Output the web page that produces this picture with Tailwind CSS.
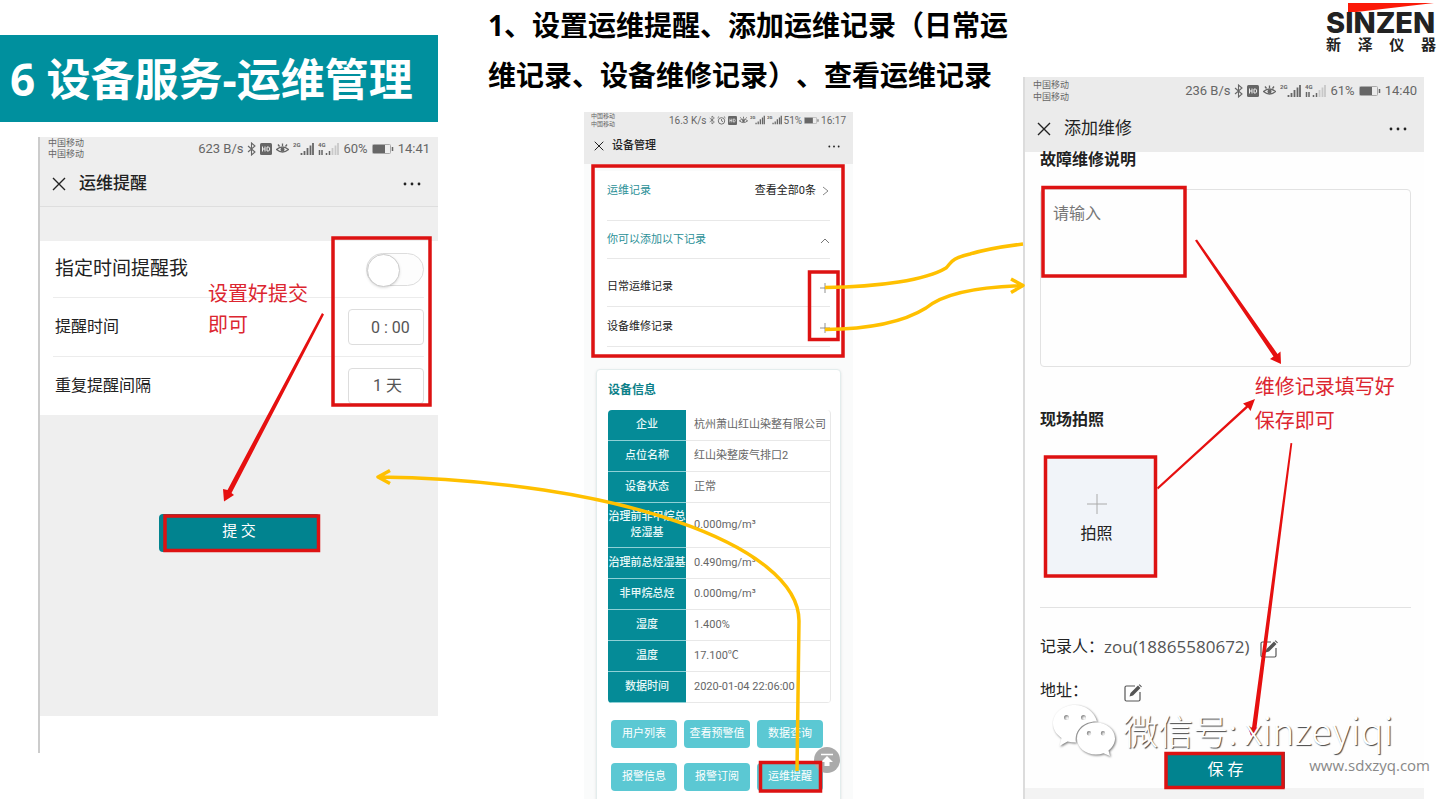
<!DOCTYPE html>
<html lang="zh-CN">
<head>
<meta charset="utf-8">
<meta name="viewport" content="width=device-width, initial-scale=1">
<title>设备服务-运维管理</title>
<script src="https://cdn.jsdelivr.net/npm/@tailwindcss/browser@4"></script>
</head>
<body class="bg-white font-['Roboto','Noto_Sans_CJK_SC',sans-serif] text-[#222]">

<svg class="hidden" aria-hidden="true">
  <defs>
    <symbol id="bt" viewBox="0 0 9 14"><path d="M1 4l7 6-3.500 3V1L8 4 1 10" fill="none" stroke="currentColor" stroke-width="1.1"/></symbol>
    <symbol id="hd" viewBox="0 0 12 12"><rect width="12" height="12" rx="1.500" fill="currentColor"/><path d="M2.500 3.500v5M5 3.500v5M2.500 6H5M7 4v4h1.200q1.500 0 1.500-2t-1.500-2z" fill="none" stroke="#eee" stroke-width="1"/></symbol>
    <symbol id="eye" viewBox="0 0 13 12"><path d="M.5 6.500Q6.500 1.500 12.500 6.500 6.500 11.500 .5 6.500zM2 1.500l1.500 2M6.500 .5v2.500M11 1.500l-1.500 2" fill="none" stroke="currentColor" stroke-width="1.300"/><circle cx="6.500" cy="6.500" r="2" fill="currentColor"/></symbol>
    <symbol id="clock" viewBox="0 0 12 12"><circle cx="6" cy="6.500" r="4.300" fill="none" stroke="currentColor" stroke-width="1.200"/><path d="M6 4v2.500l2 1M.8 2.500l2-1.800M11.200 2.500l-2-1.800" fill="none" stroke="currentColor" stroke-width="1.200"/></symbol>
    <symbol id="sig" viewBox="0 0 21 14"><text x="0" y="5" font-size="6" font-weight="700" fill="currentColor">2G</text><path d="M8.500 13v-2M11.500 13V9M14.500 13V6M17.500 13V3.500M20 13V1" stroke="currentColor" stroke-width="1.800"/></symbol>
    <symbol id="sig4" viewBox="0 0 21 14"><text x="0" y="5" font-size="6" font-weight="700" fill="currentColor">4G</text><path d="M1.500 13V8M4 13V8M8.500 13v-2M11.500 13V9" stroke="currentColor" stroke-width="1.500"/><path d="M14.500 13V6M17.500 13V3.500M20 13V1" stroke="#c8c8c8" stroke-width="1.800"/></symbol>
    <symbol id="bat" viewBox="0 0 22 10"><rect x=".5" y=".5" width="18" height="9" rx="1" fill="none" stroke="#aaa"/><rect x="1" y="1" width="12" height="8" fill="currentColor"/><path d="M20.500 3v4" stroke="currentColor" stroke-width="1.500"/></symbol>
    <symbol id="x" viewBox="0 0 14 14"><path d="M1 1l12 12M13 1L1 13" fill="none" stroke="currentColor" stroke-width="1.400"/></symbol>
    <symbol id="dots" viewBox="0 0 18 4"><circle cx="2" cy="2" r="1.400" fill="currentColor"/><circle cx="9" cy="2" r="1.400" fill="currentColor"/><circle cx="16" cy="2" r="1.400" fill="currentColor"/></symbol>
    <symbol id="plus" viewBox="0 0 10 10"><path d="M5 0v10M0 5h10" stroke="currentColor" stroke-width=".8" fill="none"/></symbol>
    <symbol id="edit" viewBox="0 0 18 18"><path d="M11 2H2.500Q1 2 1 3.500v12Q1 17 2.500 17h12q1.500 0 1.500-1.500V8" fill="none" stroke="currentColor" stroke-width="1.200"/><path d="M5.500 12.500l1-3.500 7.500-7.500 2.500 2.500L9 11.500zM14.800 .9l.8-.7 2.300 2.300-.7.800z" fill="currentColor"/></symbol>
  </defs>
</svg>

<main class="relative grid min-h-screen grid-cols-[438fr_585fr_421fr] overflow-hidden">

  <!-- Reminder screen -->
  <section class="pt-[35px]">
    <h1 class="flex h-[87px] items-center bg-[#00909e] pl-2.5 font-['Open_Sans','Noto_Sans_CJK_SC',sans-serif] text-[44px] font-bold whitespace-nowrap text-white">6 设备服务-运维管理</h1>
    <div class="mt-[15px] ml-[38px] border-l-2 border-[#ccc] bg-white">
      <header class="border-b border-[#dedede] bg-[#eee]">
        <div class="flex h-6 items-center justify-between pr-2 pl-2 text-[#666]">
          <div class="text-[9px] leading-[11px]">中国移动<br>中国移动</div>
          <div class="flex items-center gap-1 text-[13px]">
            <span>623 B/s</span>
            <svg class="h-3.5 w-[9px]"><use href="#bt"/></svg>
            <svg class="size-3"><use href="#hd"/></svg>
            <svg class="h-3 w-[13px]"><use href="#eye"/></svg>
            <svg class="h-3.5 w-[21px]"><use href="#sig"/></svg>
            <svg class="h-3.5 w-[21px]"><use href="#sig4"/></svg>
            <span>60%</span>
            <svg class="h-2.5 w-[22px]"><use href="#bat"/></svg>
            <span>14:41</span>
          </div>
        </div>
        <div class="flex h-[45px] items-center pr-[17px] pl-3">
          <button aria-label="关闭"><svg class="size-3.5"><use href="#x"/></svg></button>
          <h2 class="ml-[13px] flex-1 text-[17px] font-medium">运维提醒</h2>
          <button aria-label="更多"><svg class="h-1 w-[18px]"><use href="#dots"/></svg></button>
        </div>
      </header>
      <form>
        <div class="h-[34px] bg-[#efefef]"></div>
        <div class="pr-3.5 pl-[13px]">
          <div class="flex h-[57px] items-center justify-between border-b border-[#ececec] pl-0.5">
            <label for="remind" class="text-[19px]">指定时间提醒我</label>
            <input id="remind" type="checkbox" class="h-[33px] w-[58px] appearance-none rounded-full border border-[#ddd] bg-[#fdfdfd] before:block before:size-[33px] before:rounded-full before:border before:border-[#ccc] before:bg-white before:shadow">
          </div>
          <div class="flex h-[59px] items-center justify-between border-b border-[#ececec] pl-0.5">
            <label for="time" class="text-[16px]">提醒时间</label>
            <input id="time" type="text" value="0 : 00" class="h-9 w-[76px] rounded border border-[#ddd] pl-[22px] text-[16px] text-[#555]">
          </div>
          <div class="flex h-[58px] items-center justify-between pl-0.5">
            <label for="interval" class="text-[16px]">重复提醒间隔</label>
            <select id="interval" class="h-9 w-[76px] appearance-none rounded border border-[#ddd] pl-6 text-[16px] text-[#555]"><option>1 天</option></select>
          </div>
        </div>
        <div class="h-[301px] bg-[#efefef] pt-[99px]">
          <button type="button" class="mx-auto block h-[38px] w-[161px] rounded bg-[#01838f] pb-1 text-[15px] text-white">提 交</button>
        </div>
      </form>
      <div class="h-[37px]"></div>
    </div>
  </section>

  <!-- Device management screen -->
  <section>
    <p class="h-28 pl-[50px] font-['Open_Sans','Noto_Sans_CJK_SC',sans-serif] text-[28px] leading-[50px] font-bold whitespace-nowrap text-black [text-spacing-trim:space-all]">1、设置运维提醒、添加运维记录（日常运<br>维记录、设备维修记录）、查看运维记录</p>
    <div class="grid grid-cols-[146fr_269fr_170fr]">
      <div class="col-start-2 h-[687px] overflow-hidden bg-[#fafbfb] text-[11px]">
        <header class="bg-[#ebebeb]">
          <div class="flex h-4 items-center justify-between px-[7px] text-[#666]">
            <div class="text-[6px] leading-2">中国移动<br>中国移动</div>
            <div class="flex items-center gap-0.5 text-[10px]">
              <span>16.3 K/s</span>
              <svg class="h-2.5 w-1.5"><use href="#bt"/></svg>
              <svg class="size-[9px]"><use href="#clock"/></svg>
              <svg class="size-[9px]"><use href="#hd"/></svg>
              <svg class="size-[9px]"><use href="#eye"/></svg>
              <svg class="h-2.5 w-[15px]"><use href="#sig"/></svg>
              <svg class="h-2.5 w-[15px]"><use href="#sig"/></svg>
              <span>51%</span>
              <svg class="h-[7px] w-[15px]"><use href="#bat"/></svg>
              <span>16:17</span>
            </div>
          </div>
          <div class="flex h-9 items-center pr-[13px] pl-2.5">
            <button aria-label="关闭"><svg class="size-2.5"><use href="#x"/></svg></button>
            <h2 class="ml-2 flex-1 font-medium">设备管理</h2>
            <button aria-label="更多"><svg class="h-[3px] w-3"><use href="#dots"/></svg></button>
          </div>
        </header>

        <div class="mx-3 mt-[7px] h-[184px] bg-white px-[11px]">
          <div class="flex h-[50px] items-start justify-between border-b border-[#e8e8e8]">
            <h3 class="leading-10 text-[#2b9097]">运维记录</h3>
            <a href="#" class="flex h-10 items-center gap-1.5">查看全部0条
              <svg class="h-2.5 w-2" viewBox="0 0 8 10"><path d="M1 1l5 4-5 4" fill="none" stroke="#888"/></svg></a>
          </div>
          <button class="flex h-[38px] w-full items-center justify-between border-b border-[#e8e8e8] pt-0.5 text-[#2b9097]">你可以添加以下记录
            <svg class="h-2 w-2.5" viewBox="0 0 10 8"><path d="M1 6l4-4 4 4" fill="none" stroke="#777"/></svg></button>
          <button class="flex h-12 w-full items-center justify-between border-b border-[#e8e8e8] pt-2.5">日常运维记录
            <svg class="size-2.5 text-[#777]"><use href="#plus"/></svg></button>
          <button class="flex h-10 w-full items-center justify-between border-b border-[#e8e8e8] pt-0.5">设备维修记录
            <svg class="size-2.5 text-[#777]"><use href="#plus"/></svg></button>
        </div>

        <div class="mx-3 mt-3.5 h-[440px] rounded border border-[#e3eded] bg-white pt-2.5 pr-[9px] pl-[11px] shadow-sm">
          <h3 class="text-[12px] leading-5 font-bold text-[#0c8089]">设备信息</h3>
          <table class="mt-2.5 w-full border-separate border-spacing-0 overflow-hidden rounded border-r border-[#e8e8e8] text-left text-[11px] leading-4 [&_td]:border-b [&_td]:border-[#e8e8e8] [&_td]:pl-2 [&_td]:whitespace-nowrap [&_td]:text-[#666] [&_th]:w-[78px] [&_th]:border-b [&_th]:border-[#8fd0d6] [&_th]:bg-[#058b97] [&_th]:p-0 [&_th]:text-center [&_th]:font-medium [&_th]:text-[#e8f8f8] [&_tr]:h-[31px]">
            <tr><th scope="row">企业</th><td>杭州萧山红山染整有限公司</td></tr>
            <tr><th scope="row">点位名称</th><td>红山染整废气排口2</td></tr>
            <tr><th scope="row">设备状态</th><td>正常</td></tr>
            <tr><th scope="row"><div class="py-1.5">治理前非甲烷总<br>烃湿基</div></th><td>0.000mg/m³</td></tr>
            <tr><th scope="row">治理前总烃湿基</th><td>0.490mg/m³</td></tr>
            <tr><th scope="row">非甲烷总烃</th><td>0.000mg/m³</td></tr>
            <tr><th scope="row">湿度</th><td>1.400%</td></tr>
            <tr><th scope="row">温度</th><td>17.100℃</td></tr>
            <tr><th scope="row">数据时间</th><td>2020-01-04 22:06:00</td></tr>
          </table>
          <div class="mt-[17px] grid grid-cols-3 gap-x-[7px] gap-y-[15px] pr-2 pl-[3px] text-white [&_button]:h-7 [&_button]:rounded-sm [&_button]:bg-[#5bc8d3]">
            <button>用户列表</button><button>查看预警值</button><button>数据查询</button>
            <button>报警信息</button><button>报警订阅</button><button>运维提醒</button>
          </div>
        </div>
      </div>
    </div>
  </section>

  <!-- Repair record screen -->
  <section>
    <div class="flex h-[77px] justify-end pr-2">
      <div class="w-[110px] text-[#222]">
        <svg class="ml-[22px] block h-3 w-[86px]" viewBox="0 0 86 12"><path d="M0 3h86L0 13z" fill="#fb1a08"/></svg>
        <div class="font-['Inter',sans-serif] text-[29px] leading-[22px] font-extrabold">SINZEN</div>
        <div class="flex justify-between text-[15px] leading-[22px] font-bold"><span>新</span><span>泽</span><span>仪</span><span>器</span></div>
      </div>
    </div>
    <div class="mr-5 border-l-2 border-[#dcdcdc] bg-[#fefefe]">
      <header class="bg-[#ebebeb]">
        <div class="flex h-7 items-center justify-between pr-[7px] pl-2 text-[#666]">
          <div class="text-[9px] leading-3">中国移动<br>中国移动</div>
          <div class="flex items-center gap-1 text-[13px]">
            <span>236 B/s</span>
            <svg class="h-3.5 w-[9px]"><use href="#bt"/></svg>
            <svg class="size-3"><use href="#hd"/></svg>
            <svg class="h-3 w-[13px]"><use href="#eye"/></svg>
            <svg class="h-3.5 w-[21px]"><use href="#sig"/></svg>
            <svg class="h-3.5 w-[21px]"><use href="#sig4"/></svg>
            <span>61%</span>
            <svg class="h-2.5 w-[22px]"><use href="#bat"/></svg>
            <span>14:40</span>
          </div>
        </div>
        <div class="flex h-[47px] items-center pr-[17px] pl-3">
          <button aria-label="关闭"><svg class="size-3.5"><use href="#x"/></svg></button>
          <h2 class="ml-[13px] flex-1 text-[17px]">添加维修</h2>
          <button aria-label="更多"><svg class="h-1 w-[18px]"><use href="#dots"/></svg></button>
        </div>
      </header>
      <form class="pr-[13px] pl-[15px] text-[16px]">
        <label for="fault" class="block leading-4 font-bold">故障维修说明</label>
        <textarea id="fault" placeholder="请输入" class="mt-[21px] block h-[178px] w-full resize-none rounded-sm border border-[#e2e2e2] px-3 py-3 placeholder:text-[#777]"></textarea>
        <h3 class="mt-[45px] leading-4 font-bold">现场拍照</h3>
        <button type="button" class="mt-7 ml-1 flex h-[121px] w-[113px] flex-col items-center bg-[#f1f4f9] pt-[38px] pr-2">
          <svg class="size-5 text-[#aaa]" viewBox="0 0 20 20"><path d="M10 0v20M0 10h20" stroke="currentColor"/></svg>
          <span class="mt-2">拍照</span>
        </button>
        <div class="mt-[30px] border-t border-[#e2e2e2]"></div>
        <div class="mt-[27px] flex h-6 items-center">记录人：<span class="font-['Open_Sans',sans-serif] text-[17px] text-[#555]">zou(18865580672)</span>
          <button type="button" aria-label="编辑记录人" class="ml-2.5 pt-1"><svg class="size-[18px] text-[#555]"><use href="#edit"/></svg></button></div>
        <div class="mt-5 flex h-6 items-center">地址：
          <button type="button" aria-label="编辑地址" class="ml-9 pt-1"><svg class="size-[18px] text-[#555]"><use href="#edit"/></svg></button></div>
        <button type="button" class="mt-[49px] ml-[126px] block h-9 w-[119px] bg-[#01838f] text-white">保 存</button>
      </form>
      <div class="h-[11px] bg-[#f3f3f3]"></div>
    </div>
  </section>

  <!-- Callouts drawn over the three screens -->
  <div class="pointer-events-none absolute top-[747px] left-[56.4%] size-[26px] rounded-full bg-[#aaa]">
    <svg viewBox="0 0 26 26"><path d="M7 7.500h12" stroke="#fff" stroke-width="1.500"/><path d="M13 9l6 6h-3.500v4h-5v-4H7z" fill="#fff"/></svg>
  </div>
  <svg class="pointer-events-none absolute inset-x-0 top-0 h-[799px] w-full" viewBox="0 0 1444 799" preserveAspectRatio="none" aria-hidden="true">
    <g fill="none" stroke="#dd1212" stroke-width="3.500">
      <rect x="333" y="238" width="97" height="167"/>
      <rect x="165" y="516" width="153.500" height="34.500"/>
      <rect x="593" y="166" width="250" height="190"/>
      <rect x="809.500" y="272" width="28.500" height="67.500"/>
      <rect x="760.500" y="762.500" width="60" height="28.500"/>
      <rect x="1043" y="187.500" width="142" height="88.500"/>
      <rect x="1045.500" y="457" width="110" height="119"/>
      <rect x="1166" y="753.500" width="117" height="34"/>
    </g>
    <g fill="#e61010">
      <path d="M322 313L324 314.500 231.500 493 234 495 224 501.500 223 489 227.500 490z"/>
      <path d="M1195 240.500L1197 239.500 1277.500 354 1280.500 351.500 1281 364 1270 359 1273.500 356.500z"/>
      <path d="M1157 487.500l1 2L1248 407.500 1250.500 411 1255 399 1243 403.500 1246 406z"/>
      <path d="M1290.500 443l1.800.2L1256.500 727.500 1259.500 728 1252 738.500 1248 727 1252 727.500z"/>
    </g>
    <g fill="none" stroke="#ffc000" stroke-width="3.500">
      <path d="M825 287.500C880 287 926 280 946 268C952 262 950 259 970 254Q990 248 1023 244"/>
      <path d="M825 329.500C880 329 910 318 926 308C940 296 970 287 1022 285.500M1011 279l12 6.500-12 7" stroke-linejoin="round"/>
      <path d="M797 771L799 621C799 545 615 480 378 477M390 470.500L378 477l12 6.500" stroke-linejoin="round"/>
    </g>
  </svg>
  <p class="absolute top-[279px] left-[14.4%] text-[20px] leading-[31px] text-[#dc2630]">设置好提交<br>即可</p>
  <p class="absolute top-[370px] left-[86.9%] text-[20px] leading-[34px] text-[#dc2630]">维修记录填写好<br>保存即可</p>
  <div class="absolute top-[699px] left-[72.8%] flex items-center gap-1.5">
    <svg class="h-[56px] w-[66px] [filter:drop-shadow(1px_1px_1px_#777)]" viewBox="0 0 66 56" fill="#fff">
      <path fill-rule="evenodd" d="M24 3C12 3 2 11 2 21.500c0 6 3.500 11 8.500 14.500L8.500 44l8-4.500q4 1 8.500 1C23 28 33 19 46 19.500 43.500 9.500 34 3 24 3zM15.500 13a2.500 2.500 0 1 1 0 5 2.500 2.500 0 0 1 0-5zm17 0a2.500 2.500 0 1 1 0 5 2.500 2.500 0 0 1 0-5z"/>
      <path fill-rule="evenodd" d="M45 20.500c-10.500 0-19 7-19 16s8.500 16 19 16q4 0 7.500-1.200L59 54l-1.500-5.500c4-3 6.500-7.500 6.500-12 0-9-8.500-16-19-16zM38 29a2.200 2.200 0 1 1 0 4.400 2.200 2.200 0 0 1 0-4.400zm14 0a2.200 2.200 0 1 1 0 4.400 2.200 2.200 0 0 1 0-4.400z"/>
    </svg>
    <span class="font-['Noto_Sans_CJK_SC',sans-serif] text-[35px] leading-[60px] font-light whitespace-nowrap text-white [text-shadow:1px_1px_1px_#444]">微信号: <span class="text-[38px]">xinzeyiqi</span></span>
  </div>
  <a href="http://www.sdxzyq.com" class="absolute top-[753px] right-[14px] font-['Open_Sans',sans-serif] text-[15px] leading-6 text-[#888]">www.sdxzyq.com</a>
</main>
</body>
</html>
